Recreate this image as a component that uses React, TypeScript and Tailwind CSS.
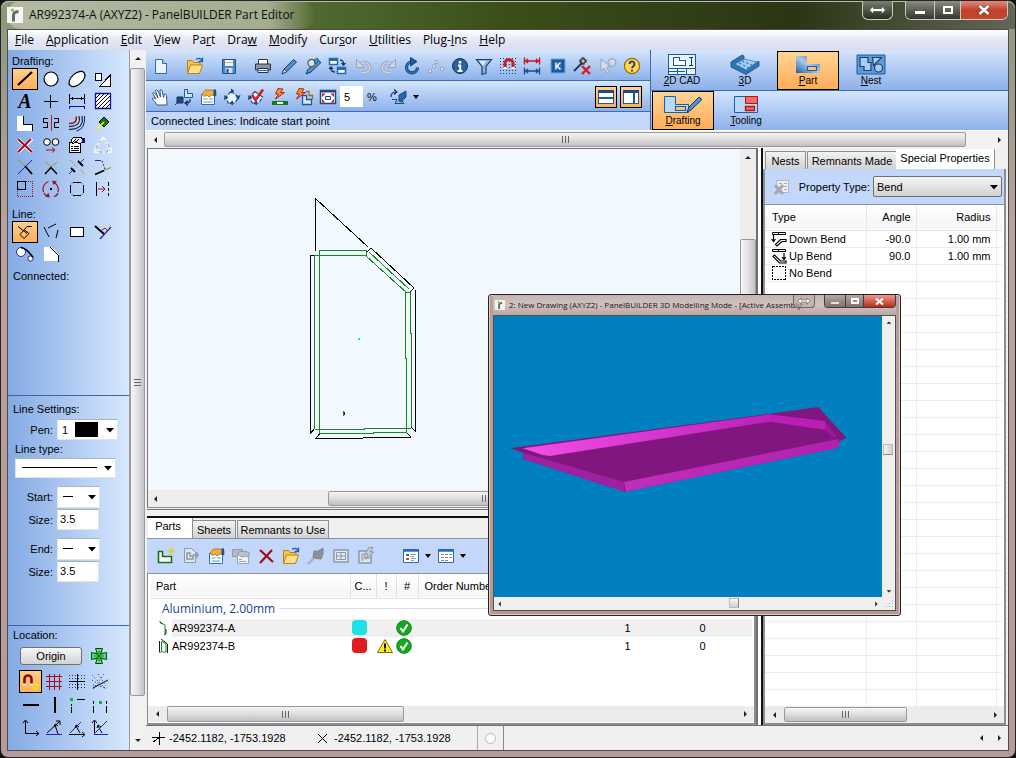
import React from "react";

type Kids = { children?: React.ReactNode };

function Ico({ w = 20, h = 20, crisp = false, children }: Kids & { w?: number; h?: number; crisp?: boolean }) {
  return (
    <svg
      width={w}
      height={h}
      viewBox={`0 0 ${w} ${h}`}
      fill="none"
      stroke="#000"
      shapeRendering={crisp ? "crispEdges" : "auto"}
      aria-hidden="true"
      className="block shrink-0"
    >
      {children}
    </svg>
  );
}

/* ---------- scroll bars ---------- */

function Arrow({ dir, label, small }: { dir: "l" | "r" | "u" | "d"; label: string; small?: boolean }) {
  const d = { l: "M6 2v6L3 5z", r: "M4 2v6l3-3z", u: "M2 6h6L5 3z", d: "M2 4h6L5 7z" }[dir];
  const s = small ? 8 : 10;
  return (
    <button aria-label={label} className="flex size-full items-center justify-center">
      <svg width={s} height={s} viewBox="0 0 10 10" fill="#222" aria-hidden="true">
        <path d={d} />
      </svg>
    </button>
  );
}

function Grip({ vertical }: { vertical?: boolean }) {
  return (
    <svg width="9" height="9" viewBox="0 0 9 9" shapeRendering="crispEdges" fill="#666" aria-hidden="true">
      {vertical ? <path d="M1 1h7v1H1zM1 4h7v1H1zM1 7h7v1H1z" /> : <path d="M1 1h1v7H1zM4 1h1v7H4zM7 1h1v7H7z" />}
    </svg>
  );
}

const H_THUMB = "flex items-center justify-center rounded-[2px] border border-[#9a9a9a] bg-linear-to-b from-[#f4f4f4] via-[#dedede] to-[#c0c0c4]";
const V_THUMB = "flex items-center justify-center rounded-[2px] border border-[#9a9a9a] bg-linear-to-r from-[#f6f6f6] via-[#e2e2e4] to-[#c3c3c8]";

/* ---------- sidebar ---------- */

function SideBtn({ label, on, children }: Kids & { label: string; on?: boolean }) {
  return (
    <button
      aria-label={label}
      className={
        on
          ? "flex h-[22px] w-[26px] items-center justify-center bg-linear-to-b from-[#ffd08a] to-[#ffae57] outline-1 -outline-offset-1 outline-black"
          : "flex h-[22px] w-[26px] items-center justify-center"
      }
    >
      {children}
    </button>
  );
}

function S({ children, smooth }: Kids & { smooth?: boolean }) {
  return (
    <Ico w={26} h={22} crisp={!smooth}>
      {children}
    </Ico>
  );
}

const draftingTools: { name: string; on?: boolean; icon: React.ReactNode }[] = [
  { name: "Line", on: true, icon: <S smooth><path d="M6 17 20 4" strokeWidth="2.200" /></S> },
  { name: "Circle", icon: <S smooth><circle cx="13" cy="11" r="7" fill="#fff" strokeWidth="1.200" /></S> },
  { name: "Ellipse", icon: <S smooth><ellipse cx="13" cy="11" rx="9.500" ry="5.500" fill="#fff" strokeWidth="1.200" transform="rotate(-42 13 11)" /></S> },
  { name: "Shapes", icon: <S><path d="M5.500 5.500h6v7h-6zM20.500 7v11.500H9.500z" fill="#fff" /></S> },
  { name: "Text", icon: <span className="font-['Liberation_Serif',serif] text-xl leading-none font-bold italic">A</span> },
  { name: "Point", icon: <S><path d="M6 11.500h14M12.500 5v13" /></S> },
  { name: "Dimension", icon: <S><path d="M5.500 4v10M20.500 4v10M6 8.500h14M8.500 7v3M17.500 7v3" /><path d="M12 8h3v1h-3z" fill="#000" stroke="none" /><path d="M5.500 19v-2.500h15V19" stroke="#10109a" /></S> },
  { name: "Hatch", icon: <S smooth><path d="M5.500 3.500h15v15h-15z" fill="#fff" stroke="#10109a" strokeWidth="1.300" /><path d="M6 8l4-4M6 12l8-8M6 16l12-12M8 18 20 6M12 18l8-8M16 18l4-4" /></S> },
  { name: "Profile", icon: <S><path d="M5 4h6v9h9v6H5z" fill="#fff" stroke="none" /><path d="M11.500 4v8.500h9V19" /></S> },
  { name: "Mirror", icon: <S><path d="M10 6.500H5.500v4H9.500v5H5M16 6.500h4.500v4H16.500v5H21" /><path d="M13.500 3v16" stroke="#c01820" /></S> },
  { name: "Offset", icon: <S smooth><path d="M12 4.500q2 7-7 7" stroke="#a01020" strokeWidth="1.400" /><path d="M15 4q3 10.500-10 10.500M18 4q3 13.500-13 13.500" /><path d="M20.500 4q1 13-8 15" stroke="#10109a" /></S> },
  { name: "Erase", icon: <S smooth><path d="m14 5 5 5-5 5-5-5z" fill="#0b7d10" strokeWidth="1" /><path d="m6 18 8-8" stroke="#f5f02a" strokeWidth="1.600" /></S> },
  { name: "Delete", icon: <S smooth><path d="m6 5 14 13M20 5 6 18" stroke="#fff" strokeWidth="3.500" /><path d="m6 5 14 13M19 5 6 18" stroke="#a01018" strokeWidth="2" /></S> },
  { name: "Copy", icon: <S smooth><circle cx="9" cy="8" r="3.300" fill="#fff" /><circle cx="17.500" cy="8" r="3.300" fill="#fff" /><path d="M8 16h9m-3-2.500 3 2.500-3 2.500" stroke="#a01020" /></S> },
  { name: "Properties", icon: <S><path d="M5.500 8.500h11v10h-11z" fill="#fff" /><path d="M7 12.500h2M10 12.500h5M7 14.500h2M10 14.500h5M7 16.500h8" /><path d="M7 8V5.500l3-2h6l3 1v4l-4 1-3-2-3 2z" fill="#e8e8e8" /><path d="m9 8 3-3M12 8l3-3" /><path d="M18 4h3v5h-3z" fill="#10109a" stroke="none" /></S> },
  { name: "Polygon", icon: <S smooth><path d="M13 4 19.500 12l-2.500 6H9l-2.500-6z" stroke="#f6f8fb" strokeWidth="2.200" /><path d="M13 4 19.500 12l-2.500 6H9l-2.500-6z" stroke="#8b95a6" strokeDasharray="5 2" /><path d="m10.500 6.500 2.500-3 2.500 3M5 14l-.5 4 4 .5M21 13.500l.5 4.500-4 .5" stroke="#f6f8fb" strokeWidth="1.500" /></S> },
  { name: "Trim", icon: <S smooth><path d="m6 4 7 6" stroke="#9c9c28" /><path d="m13 10 7 8" strokeWidth="1.800" /><path d="M20 4 6 18" stroke="#2528a8" /></S> },
  { name: "Extend", icon: <S smooth><path d="m7 5 6 6M19 6l-6 5" stroke="#9c9c28" /><path d="m7 18 6-6.500 6 6.500" strokeWidth="1.500" /></S> },
  { name: "Break", icon: <S smooth><path d="m6 4 7 7M20 18l-4-5" stroke="#9c9c28" strokeDasharray="2 1" /><path d="m5 18 5-5M15 8l5-5" stroke="#2528a8" /><path d="m7 12 4 4M14 5l5 5" strokeWidth="1.800" /></S> },
  { name: "Fillet", icon: <S smooth><path d="M5 4.500h6" stroke="#2528a8" /><path d="m12 5 3 8" strokeDasharray="1.500 2" /><path d="m5 18.500 9-4" strokeWidth="1.800" /><path d="m14 14.500 7-3" stroke="#9c9c28" strokeWidth="1.300" /></S> },
  { name: "Scale", icon: <S><path d="M5.500 3.500h15v15h-15z" stroke="#a01020" strokeDasharray="1 1" /><path d="M5.500 3.500h8v8h-8z" /></S> },
  { name: "Rotate", icon: <S smooth><path d="M5.500 14a8 8 0 0 1 5-10.500M16 4.500a8 8 0 0 1 4 9.500M9 18q-2-1-3-3M20 15q-1 3-4 3.500" stroke="#a01020" strokeWidth="1.200" /><path d="m14 2.500 5 1-3.500 3.500zM12 19.500l-5-1 3.500-3.500z" fill="#a01020" stroke="none" /><path d="M12 10h2v2h-2z" fill="#000" stroke="none" /></S> },
  { name: "Chamfer", icon: <S smooth><path d="M9 4.500h8M9 17.500h8M6.500 7v8M19.500 7v8" /><path d="M7 6l2-1M17 5l2 1M7 16l2 1M17 17l2-1" stroke="#8b93ab" /></S> },
  { name: "Stretch", icon: <S smooth><path d="M6.500 4v14M18.500 4v4M18.500 10v3M18.500 15v3" /><path d="M8 11h7m-3-3 3 3-3 3" stroke="#a01020" /></S> },
];

const lineTools: { name: string; on?: boolean; icon: React.ReactNode }[] = [
  { name: "Connected", on: true, icon: <S smooth><path d="m6 5.500 9 7M20 5.500h-5l-7 8 4 4 5-5-5-4" strokeWidth="1" /></S> },
  { name: "Separate", icon: <S smooth><path d="m6 6 5 10M10 7l8-4M20 9l-2 8" strokeWidth="1" /></S> },
  { name: "Rectangle", icon: <S><path d="M6.500 6.500h13v9h-13z" fill="#fff" /></S> },
  { name: "Perpendicular", icon: <S smooth><path d="m5 5 9 8" strokeWidth="2" /><path d="M10 18 21 6" stroke="#2528a8" strokeWidth="1.300" /><path d="m12 9 3-2 3 3" stroke="#a01020" /></S> },
  { name: "Tangent", icon: <S smooth><circle cx="9" cy="9" r="4.500" fill="#fff" stroke="#2528a8" /><circle cx="18.500" cy="15.500" r="2.600" fill="#fff" stroke="#2528a8" /><path d="M9 4.500q6 1 12 10" strokeWidth="1.600" /></S> },
  { name: "Corner", icon: <S><path d="M6 4h7l8 8v6H6z" fill="#fff" stroke="none" /><path d="M12 4l8 8v7" /></S> },
];

function L({ children, crisp = true }: Kids & { crisp?: boolean }) {
  return (
    <Ico w={22} h={22} crisp={crisp}>
      {children}
    </Ico>
  );
}

const locationTools: { name: string; on?: boolean; icon: React.ReactNode }[] = [
  { name: "Snap", on: true, icon: <L crisp={false}><path d="M4.500 13V8a3.500 3.500 0 0 1 7 0v5" stroke="#8c0c14" strokeWidth="2.600" /><path d="M3 13.500h3M10 13.500h3" stroke="#f4f4f4" strokeWidth="2" /><path d="M13.500 13.500h4v4h-4z" stroke="#f0e810" strokeWidth="1.400" /></L> },
  { name: "Grid", icon: <L><path d="M3 5.500h16M3 10.500h16M3 15.500h16M6.500 3v16M11.500 3v16M16.500 3v16" stroke="#a01020" /></L> },
  { name: "Dot grid", icon: <L><path d="M3 4.500h16M3 7.500h16M3 13.500h16M3 16.500h16" stroke="#2528a8" strokeDasharray="1 2" /><path d="M3 10.500h16M11.500 3v16" /></L> },
  { name: "Radial grid", icon: <L crisp={false}><path d="M3 4l14 14M3 9l14 9M4 14l14 3M9 3l8 12M15 3l-11 15" stroke="#2528a8" strokeDasharray="1 2.500" /><path d="m4 17 15-8" /></L> },
  { name: "Horizontal", icon: <L><path d="M3 11h16" strokeWidth="2" /></L> },
  { name: "Vertical", icon: <L><path d="M12 3v16" strokeWidth="2" /></L> },
  { name: "Align corner", icon: <L><path d="M4 4h3v3H4z" fill="#16b030" stroke="none" /><path d="M11 5.500h8M5.500 10v2M5.500 13v6" /></L> },
  { name: "Align middle", icon: <L><path d="M4.500 7v3M4.500 12v7M17.500 7v3M17.500 12v7" /><path d="M10 7h3v3h-3z" fill="#16b030" stroke="none" /></L> },
  { name: "Axes", icon: <L crisp={false}><path d="M5.500 4v12.500H18M3 6l2.500-3L8 6M16 14l3 2.500-3 2.500" /></L> },
  { name: "Polar", icon: <L crisp={false}><path d="M4 16 17 4M13 4h4v4M12 8l3 9M11 10l1-3 3 2" /><path d="M3 17.500h16" stroke="#2528a8" /></L> },
  { name: "Angle", icon: <L crisp={false}><path d="M4 16 15 5" stroke="#2528a8" /><path d="M3 17.500h15m-2-2.500 3 2.500-3 2.500M10 9l4 7M9 11l1-3 3 2" /></L> },
  { name: "Axis angle", icon: <L crisp={false}><path d="M5.500 4v13M3 6l2.500-3L8 6M9 9l4 7M8 11l1-3 3 2" /><path d="M5 17 18 4M5 17.500h14" stroke="#2528a8" /></L> },
];

function Caret() {
  return (
    <svg width="8" height="5" viewBox="0 0 8 5" aria-hidden="true" className="pointer-events-none absolute top-1/2 right-1 -mt-0.5">
      <path d="M0 0h8L4 4.500z" />
    </svg>
  );
}

const FIELD = "border border-[#dfe5ee] border-t-[#a9b2c0] bg-white";

function StyleSelect({ label, id }: { label: string; id: string }) {
  return (
    <div className="flex items-center gap-1">
      <label htmlFor={id} className="w-[45px] text-right">{label}</label>
      <div className="relative">
        <select id={id} className={`${FIELD} block h-[22px] w-[43px] appearance-none`}>
          <option value="plain" aria-label="Plain" />
        </select>
        <span className="pointer-events-none absolute top-2.5 left-1.5 h-px w-2.5 bg-black" />
        <Caret />
      </div>
    </div>
  );
}

function SizeField({ id }: { id: string }) {
  return (
    <div className="flex items-center gap-1">
      <label htmlFor={id} className="w-[45px] text-right">Size:</label>
      <input id={id} defaultValue="3.5" className={`${FIELD} h-[21px] w-[42px] px-0.5 pb-0.5`} />
    </div>
  );
}

function Sidebar() {
  return (
    <aside className="flex w-[121px] shrink-0 flex-col bg-linear-to-r from-[#84aae4] to-[#d8e8fe]">
      <section className="min-h-[345px] px-1 pt-1">
        <h2 className="h-[14px] leading-[14px]">Drafting:</h2>
        <div className="grid grid-cols-[repeat(4,26px)]">
          {draftingTools.map((t) => (
            <SideBtn key={t.name} label={t.name} on={t.on}>{t.icon}</SideBtn>
          ))}
        </div>
        <h2 className="mt-[7px] h-[14px] leading-[14px]">Line:</h2>
        <div className="grid grid-cols-[repeat(4,26px)]">
          {lineTools.map((t) => (
            <SideBtn key={t.name} label={t.name} on={t.on}>{t.icon}</SideBtn>
          ))}
        </div>
        <h2 className="mt-1 pl-px leading-[14px]">Connected:</h2>
      </section>
      <section className="min-h-[230px] border-t border-[#3c66a4] pt-1.5">
        <h2 className="pl-[5px] leading-[14px]">Line Settings:</h2>
        <div className="mt-[3px] flex items-center gap-1">
          <label htmlFor="pen" className="w-[45px] text-right">Pen:</label>
          <div className="relative">
            <select id="pen" className={`${FIELD} block h-[21px] w-[61px] appearance-none pl-1`}>
              <option>1</option>
            </select>
            <span className="pointer-events-none absolute top-[3px] left-[18px] h-[15px] w-[23px] bg-black" />
            <Caret />
          </div>
        </div>
        <label htmlFor="linetype" className="mt-0.5 block pl-[7px] leading-[14px]">Line type:</label>
        <div className="relative mt-0.5 ml-[7px] w-[101px]">
          <select id="linetype" className={`${FIELD} block h-[20px] w-full appearance-none`}>
            <option value="solid" aria-label="Solid" />
          </select>
          <span className="pointer-events-none absolute top-[9px] left-[7px] h-px w-[75px] bg-black" />
          <Caret />
        </div>
        <div className="mt-2 flex flex-col gap-px">
          <StyleSelect label="Start:" id="start" />
          <SizeField id="start-size" />
        </div>
        <div className="mt-2 flex flex-col gap-px">
          <StyleSelect label="End:" id="end" />
          <SizeField id="end-size" />
        </div>
      </section>
      <section className="flex-1 border-t border-[#3c66a4] pt-0.5">
        <h2 className="pl-[5px] leading-[14px]">Location:</h2>
        <div className="mt-[5px] ml-3 flex items-center gap-2">
          <button className="h-[18px] w-[62px] rounded-[3px] border border-[#707070] bg-linear-to-b from-[#f6f6f6] to-[#d4d4d4]">Origin</button>
          <button aria-label="Set origin">
            <Ico w={18} h={18}>
              <path d="M5.500 1.500h7L10.500 7l6-1.500v7L10.500 11l2 5.500h-7L7.500 11l-6 1.500v-7L7.500 7z" fill="#4fe868" stroke="#05460c" />
              <path d="m5.500 5.500 7 7M12.500 5.500l-7 7M9 4v10M4 9h10" stroke="#05460c" strokeWidth=".7" />
            </Ico>
          </button>
        </div>
        <div className="mt-[5px] ml-[11px] grid grid-cols-[repeat(4,23px)]">
          {locationTools.map((t) => (
            <button
              key={t.name}
              aria-label={t.name}
              className={
                t.on
                  ? "flex h-[23px] w-[23px] items-center justify-center bg-linear-to-b from-[#ffd08a] to-[#ffae57] outline-1 -outline-offset-1 outline-black"
                  : "flex h-[23px] w-[23px] items-center justify-center"
              }
            >
              {t.icon}
            </button>
          ))}
        </div>
      </section>
    </aside>
  );
}

/* ---------- top tool bars ---------- */

function TB({ label, children }: Kids & { label: string }) {
  return (
    <button aria-label={label} className="flex h-6 w-6 shrink-0 items-center justify-center">
      <Ico>{children}</Ico>
    </button>
  );
}

function FolderArt() {
  return (
    <>
      <path d="M2.500 17V4.500h5l1.500 2h6V9" fill="#f3c64c" stroke="#b8801a" />
      <path d="M2.500 17.500 5.500 9h12l-3 8.500z" fill="#ffe08a" stroke="#b8801a" />
      <path d="M11 3.500q4-2.500 6 1M17.500 1.500v4h-4" stroke="#1f5ea8" strokeWidth="1.300" />
    </>
  );
}

function PropsArt({ off }: { off?: boolean }) {
  return (
    <>
      <path d="M3.500 7.500h13v10h-13z" fill={off ? "#dfe3ea" : "#fff"} stroke={off ? "#9aa2ae" : "#2a70b8"} />
      <path d="M4 7 7.500 3H14l4 1v5l-4-1-3 2-2-2-3 1.500z" fill={off ? "#bcc2cb" : "#f2ae3c"} stroke={off ? "#959ca8" : "#a06c1c"} strokeWidth=".8" />
      <path d="M5.500 12h4M5.500 15h9M11 12h4" stroke={off ? "#9aa2ae" : "#4a9bd8"} />
      <path d="M15.500 2.500H18V9h-2.500z" fill={off ? "#959ca8" : "#1d4f90"} stroke="none" />
    </>
  );
}

function ToolbarOne() {
  return (
    <div role="toolbar" aria-label="Standard" className="flex h-[31px] items-center border-b border-[#3f6bac] bg-linear-to-b from-[#d4e5fc] to-[#8db1ea] pt-px pl-[3px]">
      <div className="flex gap-2.5">
        <TB label="New"><path d="M4.500 3.500h7l4 4v10h-11z" fill="#eaf3fd" stroke="#2d6cb0" /><path d="M11.500 3.500v4h4" fill="#bcd6f2" stroke="#2d6cb0" /></TB>
        <TB label="Open"><FolderArt /></TB>
        <TB label="Save"><path d="M3.500 3.500h13v14h-13z" fill="#4e86c8" stroke="#1f4f90" /><path d="M6 4h8v6H6z" fill="#eef4fb" stroke="none" /><path d="M6 6.500h8" stroke="#e4b050" /><path d="M6.500 12h7v5h-7z" fill="#d5dce6" stroke="none" /><path d="M7.500 13h2v4h-2z" fill="#1f4f90" stroke="none" /></TB>
        <TB label="Print"><path d="M5.500 8V3.500h9V8" fill="#fff" stroke="#333" /><path d="M2.500 8h15v6h-15z" fill="#8b95a4" stroke="#2c323c" /><path d="M5 12.500h10v4H5z" fill="#e8eef6" stroke="#2c323c" /><path d="M6 14.500h8" stroke="#2d6cb0" /></TB>
      </div>
      <div className="ml-0.5 flex">
        <TB label="Pencil"><path d="M3 18 5 13 14.500 3.500 17.500 6 8 15.500z" fill="#4c92d4" stroke="#153a66" /><path d="M3 18 5 13l3 2.500z" fill="#f3dcae" stroke="#153a66" strokeWidth=".8" /></TB>
        <TB label="Find pencil"><path d="M3 18 5 13.500 15 4 18 6.500 8 16z" fill="#4c92d4" stroke="#153a66" /><circle cx="8.500" cy="7" r="3.600" fill="#cde4f8" stroke="#6a5a20" strokeWidth="1.200" /><path d="m11 4 3-2 2 2-3.500 4z" fill="#4c92d4" stroke="#153a66" strokeWidth=".7" /></TB>
        <TB label="Swap windows"><path d="M2.500 2.500h8v6h-8zM10.500 11.500h8v6h-8z" fill="#fff" stroke="#2468b0" strokeWidth="1.500" /><path d="M2 4h9M10 13h9" stroke="#2468b0" strokeWidth="2" /><path d="M13 4q4 0 3.500 5M14.500 7l2 2 2-2M8 16q-5 0-4-5M2 13l2-2 2 2" stroke="#1d2f60" strokeWidth="1.300" /></TB>
      </div>
      <div className="ml-[3px] flex">
        <TB label="Undo"><path d="M8 16.500c5 1 8.500-2 7.500-6s-6-5-9-2" stroke="#9aa6b8" strokeWidth="3.200" /><path d="M8 16.500c5 1 8.500-2 7.500-6s-6-5-9-2" stroke="#cdd5e2" strokeWidth="1.500" /><path d="M2.500 3.500v8h8z" fill="#cdd5e2" stroke="#9aa6b8" /></TB>
        <TB label="Redo"><path d="M12 16.500c-5 1-8.500-2-7.500-6s6-5 9-2" stroke="#9aa6b8" strokeWidth="3.200" /><path d="M12 16.500c-5 1-8.500-2-7.500-6s6-5 9-2" stroke="#cdd5e2" strokeWidth="1.500" /><path d="M17.500 3.500v8h-8z" fill="#cdd5e2" stroke="#9aa6b8" /></TB>
        <TB label="Refresh"><path d="M9 6a5.500 5.500 0 1 0 6.500 5.500" stroke="#16447e" strokeWidth="3.200" /><path d="M9 6a5.500 5.500 0 1 0 6.500 5.500" stroke="#2e78c4" strokeWidth="1.400" /><path d="M8.500 1.500v8.500L15 5.500z" fill="#1d5a9e" stroke="#16447e" /></TB>
        <TB label="Nodes"><path d="m4 14 4-4 2.500-3 4 4 2 3" stroke="#9aa6b8" strokeDasharray="2 1" /><path d="M2.500 13.500h3v3h-3zM9 4.500h3v3H9zM14.500 11.500h3v3h-3zM6.500 9h3v3h-3z" fill="#dfe6f0" stroke="#9aa6b8" /></TB>
        <TB label="Information"><circle cx="10" cy="10" r="7.500" fill="#2a5f9c" stroke="#12345e" /><path d="M10 5v2.500" stroke="#fff" strokeWidth="2.600" /><path d="M8 9.500h2.200V15M7.500 15h5" stroke="#fff" strokeWidth="2" /></TB>
        <TB label="Filter"><path d="M2.500 3.500h15l-5.500 7V17l-4 1.500v-8z" fill="#8fb5de" stroke="#1a3f70" strokeWidth="1.200" /><path d="M5 5h7l-3 5z" fill="#dcebfa" stroke="none" /></TB>
        <TB label="Snap grid"><path d="M2 2.500h17M2 5.500h17M2 8.500h17M2 11.500h17M2 14.500h17M2 17.500h17" stroke="#1c3f78" strokeDasharray="1 2" /><path d="M7 12V7.500a4 4 0 0 1 8 0V12" stroke="#c82020" strokeWidth="3" /><path d="M5.500 12h3M13.500 12h3" stroke="#fff" strokeWidth="2" /></TB>
        <TB label="Dimensions"><path d="M2.500 1.500v7M17.500 1.500v7M3 5h14M6 3 4 5l2 2M14 3l2 2-2 2" stroke="#c01820" strokeWidth="1.400" /><path d="M2.500 11.500v7M17.500 11.500v7M3 15h14M6 13l-2 2 2 2M14 13l2 2-2 2" stroke="#1c4c88" strokeWidth="1.400" /></TB>
      </div>
      <div className="ml-0.5 flex">
        <TB label="Key"><path d="M3 3h14v14H3z" fill="#1b5a9c" stroke="#6fa6dc" /><path d="M6.500 6.500h7v7h-7z" fill="#2f78c0" stroke="none" /><path d="M8 6.500v7M12.500 6.500 9 10l3.500 3.500" stroke="#fff" strokeWidth="1.300" /></TB>
        <TB label="Remove point"><path d="m2 15 8-8" stroke="#1d2f60" strokeWidth="1.800" /><path d="M11 1.500v7M7.500 5h7" strokeWidth="3" /><path d="M11 2.500v5M8.500 5h5" stroke="#fff" /><path d="m10 10 8 8M18 10l-8 8" stroke="#d02020" strokeWidth="2.400" /></TB>
      </div>
      <div className="ml-0.5 flex">
        <TB label="Pointer help"><path d="M3 3v12l3-3 3 5 2-1-2.500-5H13z" fill="#d5dde9" stroke="#98a6bd" /><circle cx="14" cy="6.500" r="4" fill="#c4cedf" stroke="#98a6bd" /><path d="M12.500 5.500q1.500-2 3 0 0 1-1.500 2.500" stroke="#eef2f8" /></TB>
        <TB label="Help"><circle cx="10" cy="10" r="7.600" fill="#ffd84a" stroke="#9a6c10" strokeWidth="1.300" /><path d="M7.500 8a2.500 2.500 0 1 1 4 2q-1.500 1-1.500 2.200M10 13.800v1.700" stroke="#1a3f70" strokeWidth="1.900" /></TB>
      </div>
    </div>
  );
}

function ToolbarTwo() {
  return (
    <div role="toolbar" aria-label="View" className="flex h-[31px] items-center border-b border-[#3f6bac] bg-linear-to-b from-[#d4e5fc] to-[#8db1ea] pt-px pr-2 pl-0.5">
      <TB label="Pan"><path d="M7 18q-1-3-5-6 1-2 4 0L2.500 6q1-1.500 2.500.5L8 11 5.500 3.500q1.500-1.500 2.500.5l2.500 6L10 3q1.500-1 2.200.8l1.300 6.700 1-3.500q1.500-.5 2 1.500l.5 9.500z" fill="#fff" stroke="#2a4a78" strokeWidth=".9" /></TB>
      <TB label="Move to part"><path d="m1 18 4-4M3 10h6v6H3z" fill="#1b4a84" stroke="#12345e" /><path d="M10.500 2.500h3v4h5v4h-8z" fill="#cfe4fa" stroke="#1b5a9c" /><path d="M16 12q1 4-4 4m2-2.500-3 2.500 3 2.500" stroke="#1d2f60" strokeWidth="1.300" /></TB>
      <TB label="Properties"><PropsArt /></TB>
      <TB label="Regenerate"><path d="M9 4.500 16.500 10 13 16H6L4 10z" fill="#e8f2fd" stroke="#1b4a84" strokeWidth="1.200" strokeDasharray="4 1.500" /><path d="m9 1.500 3.500 2.500L9 6.500zM18.500 8l-2 5-3-3.500zM11 18.500l-4-2.500 4-2.500zM2 13l.5-5 4 3z" fill="#1b4a84" stroke="none" /></TB>
      <TB label="Check"><path d="M9 4.500 16.500 10 13 16H6L4 10z" fill="#e8f2fd" stroke="#1b4a84" strokeWidth="1.200" strokeDasharray="4 1.500" /><path d="M2 13l.5-5 4 3zM11 18.500l-4-2.500 4-2.500z" fill="#1b4a84" stroke="none" /><path d="m6 8 3.500 5L17 2.500" stroke="#d02020" strokeWidth="2.600" /></TB>
      <TB label="Flash tool"><path d="m8 1.500 5 .5-2.500 3.500h4L5.500 12l3-5h-3z" fill="#f5922c" stroke="#a01818" strokeWidth=".9" /><path d="M2 14h16v4H2z" fill="#127a1a" stroke="none" /><path d="M7 15h6v2H7z" fill="#fff" stroke="none" /></TB>
      <TB label="Flash part"><path d="M8.500 8.500h4v4h5v5h-9z" fill="#d6e8fa" stroke="#1b5a9c" strokeWidth="1.300" /><path d="M12 4.500h3v4h3.500v4" stroke="#a86a18" strokeWidth="1.300" /><path d="m5 1.500 5 .5-2.500 3.500h4L2.500 12l3-5h-3z" fill="#f5922c" stroke="#a01818" strokeWidth=".9" /></TB>
      <TB label="Zoom extents"><path d="M2.500 3.500h15v13h-15z" fill="#fff" stroke="#1b4a84" strokeWidth="1.500" /><path d="M2 4.500h16" stroke="#1b4a84" strokeWidth="2" /><path d="M7.500 9.500h5v3h-5z" stroke="#1b4a84" /><path d="M4 6.500h3.500L4 10zM16 6.500h-3.500L16 10zM4 15.500h3.500L4 12zM16 15.500h-3.500L16 12z" fill="#d02020" stroke="none" /></TB>
      <input aria-label="Zoom step" defaultValue="5" className="h-[21px] w-[23px] bg-white px-1" />
      <span className="ml-1 w-3">%</span>
      <div className="ml-2">
        <TB label="View angle"><path d="M3 12.500h5l-2 4h9l-3-4" fill="#8cbbe8" stroke="#1b4a84" /><path d="M10 14V8l7-4v6l-5 5z" fill="#2368b0" stroke="#12345e" strokeWidth=".8" /><path d="M2 10q0-5 5-5M5 2.500 8 5 5 7.500" stroke="#1d2f60" strokeWidth="1.200" /></TB>
      </div>
      <button aria-label="View angle menu" className="px-0.5"><svg width="6" height="4" viewBox="0 0 6 4" aria-hidden="true"><path d="M0 0h6L3 4z" /></svg></button>
      <div className="ml-auto flex gap-[3px]">
        <button aria-label="Split horizontal" className="flex size-[22px] items-center justify-center border border-black bg-linear-to-b from-[#ffd08a] to-[#ffae57]">
          <Ico w={16} h={14} crisp><path d="M.5.500h15v13H.5z" fill="#fff" stroke="#1b5a9c" /><path d="M0 1.500h16" stroke="#1b4a84" strokeWidth="3" /><path d="M0 8h16" stroke="#1b5a9c" strokeWidth="2" /></Ico>
        </button>
        <button aria-label="Split vertical" className="flex size-[22px] items-center justify-center border border-black bg-linear-to-b from-[#ffd08a] to-[#ffae57]">
          <Ico w={16} h={14} crisp><path d="M.5.500h15v13H.5z" fill="#fff" stroke="#1b5a9c" /><path d="M0 1.500h16" stroke="#1b4a84" strokeWidth="3" /><path d="M11 2v12" stroke="#1b5a9c" strokeWidth="2" /></Ico>
        </button>
      </div>
    </div>
  );
}

function ModeBtn({ hot, rest, on, children }: Kids & { hot: string; rest: string; on?: boolean }) {
  return (
    <button
      className={
        on
          ? "flex h-[39px] w-[62px] flex-col items-center bg-linear-to-b from-[#ffd596] to-[#ffac56] pt-[3px] text-[10px] leading-[11px] outline-1 -outline-offset-1 outline-black"
          : "flex h-[39px] w-[62px] flex-col items-center pt-[3px] text-[10px] leading-[11px]"
      }
    >
      {children}
      <span>
        <u>{hot}</u>
        {rest}
      </span>
    </button>
  );
}

function ModeBars() {
  return (
    <div className="flex flex-1 flex-col border-l border-[#3f6bac]">
      <div className="flex h-[41px] items-center gap-px border-b border-[#3f6bac] bg-linear-to-b from-[#d4e5fc] to-[#8db1ea]">
        <ModeBtn hot="2" rest="D CAD">
          <Ico w={30} h={21} crisp>
            <path d="M1.500.500h27v20h-27z" fill="#eaf4fd" stroke="#1b5a9c" />
            <path d="M1 14.500h28M1 17.500h17M10.500 14v7M19.500 14v7" stroke="#1b5a9c" />
            <path d="M6.500 3.500h6v3h6v5h-12z" stroke="#1b5a9c" fill="#fff" />
            <path d="M24 3v9M22 3.500h4M22 11.500h4" stroke="#12345e" />
          </Ico>
        </ModeBtn>
        <ModeBtn hot="3" rest="D">
          <Ico w={30} h={21}>
            <path d="M1 8 12 1l2 1v4L7 10l9 5 11-7 2-.5V12l-13 8.500L1 13z" fill="#2f74b8" stroke="#1b4a84" strokeWidth=".8" />
            <path d="M14 5 27 8l-11 8-11-6z" fill="#a9cdf0" stroke="#1b5a9c" strokeWidth=".6" />
            <path d="m12 7 10 4M9 9l10 5" stroke="#3c7cbc" strokeWidth="1.400" strokeDasharray="2.500 2" />
          </Ico>
        </ModeBtn>
        <ModeBtn hot="P" rest="art" on>
          <Ico w={26} h={21}>
            <defs>
              <linearGradient id="part-body" x1="0" x2="1" y1="1" y2="0">
                <stop offset="0" stopColor="#1f5ea0" />
                <stop offset=".5" stopColor="#a9cbea" />
                <stop offset="1" stopColor="#2f70b4" />
              </linearGradient>
            </defs>
            <path d="M1 2h11v8h13v9H1z" fill="url(#part-body)" stroke="none" />
            <path d="M12.500 12.500h9v4h-9z" fill="#ffc27a" stroke="#1f5ea0" strokeWidth="1.200" />
          </Ico>
        </ModeBtn>
        <ModeBtn hot="N" rest="est">
          <Ico w={30} h={21}>
            <path d="M1 1h28v19H1z" fill="#5f9bd6" stroke="#1b5a9c" />
            <path d="M4 3.500h8v5h3v8H8v-4H4zM16.500 3.500h9l-8 8z" fill="#a9cdf0" stroke="#1b3f70" strokeWidth="1.200" />
            <circle cx="22.500" cy="14" r="4" fill="#a9cdf0" stroke="#1b3f70" strokeWidth="1.200" />
          </Ico>
        </ModeBtn>
      </div>
      <div className="flex flex-1 items-center gap-px bg-linear-to-b from-[#d4e5fc] to-[#8db1ea] pl-px">
        <ModeBtn hot="D" rest="rafting" on>
          <Ico w={40} h={21}>
            <path d="M1.500 2.500h11v8h13v8h-24z" fill="#b9d8f5" stroke="#1f5ea0" />
            <path d="M12.500 12.500h10v4h-10z" fill="#ffc27a" stroke="#1f5ea0" strokeWidth="1.200" />
            <path d="M24 18 26 13 36 3l3 2.500L28 16z" fill="#4c92d4" stroke="#153a66" />
          </Ico>
        </ModeBtn>
        <ModeBtn hot="T" rest="ooling">
          <Ico w={26} h={21}>
            <path d="M1.500 2.500h23v16h-23z" fill="#b9d8f5" stroke="#1f5ea0" />
            <path d="M12.500 2.500h12v7h-12z" fill="#f26a60" stroke="#b01818" />
            <path d="M12.500 12.500h9v4h-9z" fill="#f26a60" stroke="#b01818" strokeWidth="1.300" />
          </Ico>
        </ModeBtn>
      </div>
    </div>
  );
}

/* ---------- drawing area ---------- */

function DrawingArea() {
  return (
    <div className="flex min-h-0 flex-1 flex-col border-t border-l border-[#6f747c] bg-[#f0f0f0]">
      <div className="flex min-h-0 flex-1">
        <div className="min-w-0 flex-1 bg-[#f2f9fe]">
          <svg className="block size-full" fill="none" shapeRendering="crispEdges" role="img" aria-label="Flat part outline">
            <g transform="translate(-148 -149)">
              <g stroke="#000">
                <path d="M368 247 315.500 198.500V250.500" />
                <path d="M315 255.500h-4.500V433.500l4-5" />
                <path d="M367 252l4-4 43 40-5 5M415.500 290V431.500l-4-4M319.500 434 316 438.500h23l72-1.500-4-4" />
                <path d="M344.500 412v3" />
              </g>
              <g stroke="#168a1c">
                <path d="M319 250.500h47M314 255.500h52M314.500 256v173M319.500 250v184M366 250v6" />
                <path d="m366 256 41 37M369 252l40 37M405.500 293v65l1 1v74M410.500 293v40l1 1v93" />
                <path d="M315 429.500h49l1-1h46M320 433.500h53l1-1h33M405 292.500h6" />
                <path d="M343.500 411v5" />
              </g>
              <path d="M358 338h2v2h-2z" fill="#00e5f5" />
            </g>
          </svg>
        </div>
        <div className="flex w-4 shrink-0 flex-col bg-[#ededed]">
          <div className="h-[18px]"><Arrow dir="u" label="Scroll drawing up" /></div>
          <div className="h-[72px]" />
          <div className={`${V_THUMB} h-[158px]`}><Grip vertical /></div>
          <div className="mt-auto h-4"><Arrow dir="d" label="Scroll drawing down" /></div>
        </div>
      </div>
      <div className="flex h-[17px] shrink-0 bg-[#ededed] pr-4">
        <div className="w-4"><Arrow dir="l" label="Scroll drawing left" /></div>
        <div className="flex flex-1 py-px pl-[164px]">
          <div className={`${H_THUMB} w-[315px]`}><Grip /></div>
        </div>
        <div className="w-4"><Arrow dir="r" label="Scroll drawing right" /></div>
      </div>
    </div>
  );
}

/* ---------- bottom parts list ---------- */

function Tick() {
  return (
    <Ico w={16} h={16}>
      <circle cx="8" cy="8" r="7.300" fill="#16a81e" stroke="#0a8412" />
      <path d="m4.500 8 2.500 3.500 4.500-7" stroke="#fff" strokeWidth="2" />
    </Ico>
  );
}

const parts = [
  { id: "AR992374-A", dot: "bg-[#1fe0e2]", warn: false, a: 1, b: 0 },
  { id: "AR992374-B", dot: "bg-[#e01c20]", warn: true, a: 1, b: 0 },
];

const TAB = "h-[18px] border border-b-0 border-[#8b8f95] bg-linear-to-b from-[#f2f2f2] to-[#d2d2d4]";

function PartsPanel() {
  return (
    <section className="flex h-[209px] shrink-0 flex-col border-t-2 border-[#111] bg-[#f0f0f0]">
      <div role="tablist" className="flex h-5 items-end pl-px">
        <button role="tab" aria-selected="true" className="h-5 w-[45px] border-r border-[#8b8f95] bg-white pr-1 pb-1">Parts</button>
        <button role="tab" className={`${TAB} w-[43px] border-l-0`}>Sheets</button>
        <button role="tab" className={`${TAB} ml-px w-[92px]`}>Remnants to Use</button>
      </div>
      <div role="toolbar" aria-label="Parts" className="flex h-9 shrink-0 items-center gap-px border-y border-[#8b93a3] bg-[#c3d7fa] pl-[7px]">
        <TB label="New part"><path d="M2.500 5.500h4v5h9v6h-13z" fill="#fff" stroke="#12701a" strokeWidth="1.600" /><path d="M15 1v8M11 5h8M12.500 2.500l5 5M17.500 2.500l-5 5" stroke="#d8d020" /></TB>
        <TB label="Import part"><path d="M3.500 2.500h7l4 4v10h-11z" fill="#dfe5ee" stroke="#9099a8" /><path d="M6 7h3v3h3v3H6zM12 9h6m-2-3v6" stroke="#9099a8" strokeWidth="1.500" /></TB>
        <TB label="Part properties"><PropsArt /></TB>
        <TB label="Copy properties"><path d="M1.500 3.500h10v7h-10z" fill="#b4bac4" stroke="#959ca8" /><path d="M6.500 8.500h11v9h-11z" fill="#eef1f5" stroke="#9aa2ae" /><path d="M6 8 9 5.500h6l3 1V11l-4-1-3 1z" fill="#bcc2cb" stroke="#959ca8" /><path d="M8 13.500h3M8 15.500h7" stroke="#9aa2ae" /></TB>
        <TB label="Delete part"><path d="m4 4 13 12M16 4 4 17" stroke="#a00c14" strokeWidth="2.200" /></TB>
        <TB label="Open part"><FolderArt /></TB>
        <TB label="Pin"><path d="M8 5q4 1 6-1l3-2v6l-2 5-8-1z" fill="#8a909a" stroke="#7c838e" /><path d="m8 12-6 6" stroke="#a7adb6" strokeWidth="2.200" /></TB>
        <TB label="Sheet layout"><path d="M3 4h14v12H3z" fill="#e3e9f2" stroke="#8e97a6" strokeWidth="1.500" /><path d="M5.500 6.500h9v7h-9zM10 6.500v7M5.500 10h9" stroke="#8e97a6" /></TB>
        <TB label="Auto nest"><path d="M3 5h12v12H3z" fill="#dfe5ee" stroke="#8e97a6" strokeWidth="1.500" /><path d="M6 15V8h3v4h5M13 1.500h4L14 6h4l-8 7 2-5H9z" fill="#c5ccd6" stroke="#8e97a6" /></TB>
        <div className="ml-5 flex items-center">
          <TB label="List view"><path d="M2.500 3.500h15v13h-15z" fill="#fff" stroke="#1f6cc0" /><path d="M2 4.500h16" stroke="#1f6cc0" strokeWidth="2.500" /><path d="M5 8h3v2H5z" fill="#3568c8" stroke="none" /><path d="M5 12h3v2H5z" fill="#d04818" stroke="none" /><path d="M10 8.500h5M10 10.500h3M10 12.500h5M10 14.500h3" stroke="#999" /></TB>
          <button aria-label="List view menu" className="w-[11px] pl-0.5"><svg width="6" height="4" viewBox="0 0 6 4" aria-hidden="true"><path d="M0 0h6L3 4z" /></svg></button>
          <TB label="Detail view"><path d="M2.500 3.500h15v13h-15z" fill="#fff" stroke="#1f6cc0" /><path d="M2 4.500h16" stroke="#1f6cc0" strokeWidth="2.500" /><path d="M5 8.500h11M5 11.500h11M5 14.500h8" stroke="#888" strokeDasharray="3 1" /></TB>
          <button aria-label="Detail view menu" className="w-[11px] pl-0.5"><svg width="6" height="4" viewBox="0 0 6 4" aria-hidden="true"><path d="M0 0h6L3 4z" /></svg></button>
        </div>
      </div>
      <div className="flex min-h-0 flex-1 flex-col border-r-2 border-b-2 border-l border-[#8b8f95] bg-white">
        <div className="min-h-0 flex-1 overflow-hidden px-0.5">
          <table className="w-full table-fixed border-collapse">
            <colgroup>
              <col className="w-[200px]" />
              <col className="w-[26px]" />
              <col className="w-5" />
              <col className="w-[22px]" />
              <col />
              <col className="w-[75px]" />
              <col className="w-[75px]" />
              <col className="w-3" />
            </colgroup>
            <thead>
              <tr className="h-[24px] border-b border-[#e2e2e2] bg-linear-to-b from-white to-[#f5f5f7] text-left">
                <th className="border-r border-[#e2e2e2] pl-1.5 font-normal">Part</th>
                <th className="border-r border-[#e2e2e2] text-center font-normal">C...</th>
                <th className="border-r border-[#e2e2e2] text-center font-normal">!</th>
                <th className="border-r border-[#e2e2e2] text-center font-normal">#</th>
                <th className="pl-1.5 font-normal">Order Number</th>
                <th />
                <th />
                <th />
              </tr>
            </thead>
            <tbody>
              <tr className="h-5">
                <td colSpan={8} className="p-0 pl-3">
                  <div className="flex items-center gap-1 font-['Open_Sans','Noto_Sans',sans-serif] text-xs leading-5 text-[#1c3f94]">
                    Aluminium, 2.00mm
                    <span className="h-px flex-1 bg-[#d5dbe8]" />
                  </div>
                </td>
              </tr>
              {parts.map((p, i) => (
                <tr key={p.id} className="h-[18px]">
                  <td className="p-0">
                    <div className="flex items-center gap-0.5 pl-2">
                      <Ico w={12} h={16}>
                        {i === 0 ? (
                          <>
                            <path d="M2 2.500 7 5v9" stroke="#168a1c" />
                            <path d="M1.500 1 4 4M8 9v5l-2 1" strokeWidth=".8" />
                          </>
                        ) : (
                          <>
                            <path d="M3.500 3.500 7 5l1 2v7H3.500z" stroke="#168a1c" />
                            <path d="M1.500 3v11l1 1M3 1l4 3 2.500 2V15" strokeWidth=".9" />
                          </>
                        )}
                      </Ico>
                      <span className={i === 0 ? "h-[18px] flex-1 bg-[#efefef] leading-[18px]" : "h-[18px] flex-1 leading-[18px]"}>{p.id}</span>
                    </div>
                  </td>
                  <td className={i === 0 ? "bg-[#efefef] p-0" : "p-0"}>
                    <span role="img" aria-label="Colour" className={`ml-0.5 block size-[15px] rounded-[4px] ${p.dot}`} />
                  </td>
                  <td className={i === 0 ? "bg-[#efefef] p-0" : "p-0"}>
                    {p.warn && (
                      <Ico w={18} h={16}>
                        <path d="M9 1.500 16.500 14.500h-15z" fill="#ffee22" stroke="#7a7410" />
                        <path d="M9 5.500v5M9 11.500v2" strokeWidth="1.800" />
                      </Ico>
                    )}
                  </td>
                  <td className={i === 0 ? "bg-[#efefef] p-0" : "p-0"}><Tick /></td>
                  <td className={i === 0 ? "bg-[#efefef]" : ""} />
                  <td className={i === 0 ? "bg-[#efefef] p-0 text-center" : "p-0 text-center"}>{p.a}</td>
                  <td className={i === 0 ? "bg-[#efefef] p-0 text-center" : "p-0 text-center"}>{p.b}</td>
                  <td className={i === 0 ? "bg-[#efefef]" : ""} />
                </tr>
              ))}
            </tbody>
          </table>
        </div>
        <div className="mb-px flex h-4 shrink-0 bg-[#ececec]">
          <div className="w-[19px]"><Arrow dir="l" label="Scroll parts left" /></div>
          <div className={`${H_THUMB} w-[237px]`}><Grip /></div>
          <div className="ml-auto w-[18px]"><Arrow dir="r" label="Scroll parts right" /></div>
        </div>
      </div>
    </section>
  );
}

/* ---------- right property panel ---------- */

const bends = [
  { name: "Down Bend", angle: "-90.0", radius: "1.00 mm" },
  { name: "Up Bend", angle: "90.0", radius: "1.00 mm" },
  { name: "No Bend", angle: "", radius: "" },
];

function BendIcon({ kind }: { kind: number }) {
  return (
    <Ico w={16} h={16} crisp={kind === 2}>
      {kind === 0 && (
        <>
          <path d="M1.500 1.500h13v2h-13zM7.500 2v2" strokeWidth="1" />
          <path d="M2.500 4v6M.5 8l2 2.500 2-2.500" strokeWidth="1.200" />
          <path d="M15 8.500H9.500l-5 5 1.500 1.500 5-4.500h4z" fill="#fff" strokeWidth="1.200" />
        </>
      )}
      {kind === 1 && (
        <>
          <path d="M1.500 1.500h13v2h-13zM7.500 2v2" strokeWidth="1" />
          <path d="M13 5v6M11 9l2 2.500L15 9" strokeWidth="1.200" />
          <path d="M2 8.500 3.500 7l6 6H15v2H8.500z" fill="#fff" strokeWidth="1.200" />
        </>
      )}
      {kind === 2 && <path d="M1.500 1.500h13v13h-13z" strokeDasharray="2 1" />}
    </Ico>
  );
}

function PropertyPanel() {
  const blanks = Array.from({ length: 40 }, (_, i) => i);
  return (
    <section className="flex w-[243px] shrink-0 flex-col">
      <div role="tablist" className="flex h-[21px] shrink-0 items-end pl-0.5">
        <button role="tab" className={`${TAB} w-[41px]`}>Nests</button>
        <button role="tab" className={`${TAB} ml-px w-[89px] border-r-0`}>Remnants Made</button>
        <button role="tab" aria-selected="true" className="h-5 w-[99px] border-r border-[#8b8f95] bg-white pb-0.5">Special Properties</button>
      </div>
      <div className="flex min-h-0 flex-1 flex-col border-x-2 border-t-0 border-b-2 border-[#8b8f95]">
        <div className="flex h-9 shrink-0 items-center border-b border-[#8b93a3] bg-[#c3d7fa] pr-0.5 pl-2">
          <button aria-label="Clear property">
            <Ico w={17} h={16}>
              <path d="M3.500 1.500h12v12h-12z" fill="#eceef2" stroke="#b2b7c0" />
              <path d="M6 4.500h3M11 4.500h3M11 7.500h3M11 10.500h3" stroke="#a3a9b3" />
              <path d="m2 6 8 9M10 6l-8 9" stroke="#a3a8b1" strokeWidth="3" />
            </Ico>
          </button>
          <label htmlFor="ptype" className="ml-auto pr-[3px]">Property Type:</label>
          <div className="relative">
            <select id="ptype" className="block h-[21px] w-[129px] appearance-none rounded-[2px] border border-[#707070] bg-linear-to-b from-[#f4f4f4] to-[#d2d2d2] pl-[3px]">
              <option>Bend</option>
            </select>
            <Caret />
          </div>
        </div>
        <div className="min-h-0 flex-1 overflow-hidden bg-white pr-0.5">
          <table className="w-full table-fixed border-collapse">
            <colgroup>
              <col />
              <col className="w-[50px]" />
              <col className="w-[80px]" />
              <col className="w-1.5" />
            </colgroup>
            <thead>
              <tr className="h-[25px] border-b border-[#e0e0e0] bg-linear-to-b from-white to-[#f5f5f7]">
                <th className="border-r border-[#e6e6e6] pl-[7px] text-left font-normal">Type</th>
                <th className="border-r border-[#e6e6e6] pr-[5px] text-right font-normal">Angle</th>
                <th className="border-r border-[#e6e6e6] pr-[5px] text-right font-normal">Radius</th>
                <th />
              </tr>
            </thead>
            <tbody>
              {bends.map((b, i) => (
                <tr key={b.name} className="h-[17px] border-b border-[#ececec]">
                  <td className="border-r border-[#ececec] p-0">
                    <div className="flex h-4 items-center gap-0.5 pl-1.5 leading-4">
                      <BendIcon kind={i} />
                      {b.name}
                    </div>
                  </td>
                  <td className="border-r border-[#ececec] p-0 pr-[5px] text-right">{b.angle}</td>
                  <td className="border-r border-[#ececec] p-0 pr-[5px] text-right">{b.radius}</td>
                  <td />
                </tr>
              ))}
              {blanks.map((n) => (
                <tr key={n} className="h-[17px] border-b border-[#ececec]">
                  <td className="border-r border-[#ececec] p-0" />
                  <td className="border-r border-[#ececec] p-0" />
                  <td className="border-r border-[#ececec] p-0" />
                  <td />
                </tr>
              ))}
            </tbody>
          </table>
        </div>
        <div className="flex h-[17px] shrink-0 bg-[#ececec]">
          <div className="w-[19px]"><Arrow dir="l" label="Scroll properties left" /></div>
          <div className={`${H_THUMB} my-px w-[123px]`}><Grip /></div>
          <div className="ml-auto w-[18px]"><Arrow dir="r" label="Scroll properties right" /></div>
        </div>
      </div>
    </section>
  );
}

/* ---------- floating 3D window ---------- */

function AppMark({ size }: { size: number }) {
  return (
    <svg width={size} height={size} viewBox="0 0 16 16" fill="none" aria-hidden="true" className="shrink-0">
      <path d="M0 0h16v16H0z" fill="#f4f4f2" />
      <path d="M6.500 14.500V8q0-3 5-3.500" stroke="#666a66" strokeWidth="3" />
      <circle cx="5.500" cy="3" r="1.600" fill="#7cc040" />
    </svg>
  );
}

function ModelWindow() {
  return (
    <div className="absolute top-[294px] left-[488px] flex h-[322px] w-[413px] flex-col rounded-[3px] border border-[#2c2022] bg-linear-to-b from-[#b3a09d] via-[#b69f9b] to-[#b29a96] px-1 pb-1 shadow-[inset_0_0_0_1px_#d9cbc8]">
      <div className="flex h-5 shrink-0 items-center gap-1 bg-linear-to-b from-[#c4b5b2] via-[#cfc2bf] to-[#b9a8a5] pl-0.5">
        <AppMark size={10} />
        <span className="font-['Open_Sans','Noto_Sans',sans-serif] text-[8px] leading-5 whitespace-nowrap text-[#1c1416]">
          2: New Drawing (AXYZ2) - PanelBUILDER 3D Modelling Mode - [Active Assembly: '...
        </span>
      </div>
      <button aria-label="Move to screen" className="absolute top-0 left-[304px] flex h-[13px] w-[22px] items-center justify-center rounded-b border border-t-0 border-[#75625f] bg-[#b7a9a6]/50">
        <svg width="12" height="8" viewBox="0 0 12 8" aria-hidden="true"><path d="m0 4 3-3v2h6V1l3 3-3 3V5H3v2z" fill="#fff" stroke="#555" strokeWidth=".6" /></svg>
      </button>
      <div className="absolute top-0 right-1 flex h-[13px] overflow-hidden rounded-b border border-t-0 border-[#4a3a38]">
        <button aria-label="Minimize 3D view" className="flex w-5 items-center justify-center bg-linear-to-b from-[#b5a7a4] to-[#7f6f6c]"><span className="mt-1 h-0.5 w-2 bg-[#e6dfdd]" /></button>
        <button aria-label="Maximize 3D view" className="flex w-[19px] items-center justify-center border-x border-[#4a3a38] bg-linear-to-b from-[#b5a7a4] to-[#7f6f6c]"><span className="h-1.5 w-2 border-2 border-white" /></button>
        <button aria-label="Close 3D view" className="flex w-[31px] items-center justify-center bg-linear-to-b from-[#e59a8c] to-[#b8260f]">
          <svg width="9" height="7" viewBox="0 0 9 7" aria-hidden="true"><path d="m1 .5 7 6M8 .5l-7 6" stroke="#fff" strokeWidth="2" /></svg>
        </button>
      </div>
      <div className="flex min-h-0 flex-1 flex-col border border-[#5b4c4a] bg-white">
        <div className="flex min-h-0 flex-1">
          <div className="min-w-0 flex-1 bg-[#0080c0]">
            <svg viewBox="42 93 1164 843" className="block size-full" role="img" aria-label="Folded tray in 3D">
              <defs>
                <linearGradient id="wall" x1="0" x2="1" y1="0" y2="0">
                  <stop offset="0" stopColor="#f24ee8" />
                  <stop offset="1" stopColor="#bb22b8" />
                </linearGradient>
                <linearGradient id="front" x1="0" x2="1" y1="0" y2="0">
                  <stop offset="0" stopColor="#c02fbb" />
                  <stop offset="1" stopColor="#b021b0" />
                </linearGradient>
              </defs>
              <path d="M90 490 870 386 1015 366 1099 458 1076 470V488L437 620 130 522V503z" fill="#80167e" />
              <path d="M128 490 870 388V410L210 513 188 510z" fill="url(#wall)" />
              <path d="M870 388 1035 408V434L870 410z" fill="#b81fb5" />
              <path d="M1035 408 1070 456 1062 460 1035 434z" fill="#9a1a9c" />
              <path d="M130 503 432 591V620L130 522z" fill="#a020a2" />
              <path d="M432 591 1076 462V488L437 620z" fill="url(#front)" />
            </svg>
          </div>
          <div className="flex w-[13px] shrink-0 flex-col bg-[#efefef]">
            <div className="h-[13px]"><Arrow dir="u" label="Tilt up" small /></div>
            <div className="flex flex-1 items-center pb-4 pl-px"><span className="h-[11px] w-[10px] border border-[#bbb] border-b-[#888] bg-linear-to-r from-[#f5f5f5] to-[#cfcfcf]" /></div>
            <div className="h-3"><Arrow dir="d" label="Tilt down" small /></div>
          </div>
        </div>
        <div className="flex h-[13px] shrink-0 bg-[#efefef]">
          <div className="w-3"><Arrow dir="l" label="Pan left" small /></div>
          <div className="flex-1 pt-px pl-[223px]"><div className="h-[10px] w-[10px] border border-[#bbb] border-r-[#888] bg-linear-to-b from-[#f5f5f5] to-[#cfcfcf]" /></div>
          <div className="w-3"><Arrow dir="r" label="Pan right" small /></div>
          <div className="w-[13px]">
            <svg width="13" height="13" viewBox="0 0 13 13" fill="#aaa" aria-hidden="true"><path d="M10 3h1v1h-1zM7 6h1v1H7zM10 6h1v1h-1zM4 9h1v1H4zM7 9h1v1H7zM10 9h1v1h-1z" /></svg>
          </div>
        </div>
      </div>
    </div>
  );
}

/* ---------- window frame ---------- */

const menus: [string, string, string][] = [
  ["", "F", "ile"],
  ["", "A", "pplication"],
  ["", "E", "dit"],
  ["", "V", "iew"],
  ["Pa", "r", "t"],
  ["Dra", "w", ""],
  ["", "M", "odify"],
  ["Cur", "s", "or"],
  ["", "U", "tilities"],
  ["Plug-", "I", "ns"],
  ["", "H", "elp"],
];

export default function App() {
  return (
    <div className="relative flex h-screen min-h-[740px] flex-col overflow-hidden bg-[#101410] font-['Liberation_Sans',Arial,sans-serif] text-[11px] leading-[14px] text-black">
      <div className="flex min-h-0 flex-1 flex-col rounded-lg border border-[#2a2224] bg-linear-to-b from-[#8e9a84] from-5% via-[#b8a29e] via-30% to-[#b49c98] px-[6px] pb-1.5">
        <header className="-mx-[6px] flex h-7 shrink-0 items-start rounded-t-lg bg-[linear-gradient(90deg,#8c9a78,#526a32_30%,#3a4f18_50%,#2b3514_78%,#62665a)] pr-[7px] pl-[6px] shadow-[inset_0_1px_0_#b8c4a8]">
          <div className="flex h-7 items-center gap-1.5 rounded-full bg-[linear-gradient(90deg,#b3bba4,#a3ad90_85%,transparent)] pr-5">
            <AppMark size={16} />
            <h1 className="font-['Open_Sans','Noto_Sans',sans-serif] text-xs text-[#101010]">AR992374-A (AXYZ2) - PanelBUILDER Part Editor</h1>
          </div>
          <button aria-label="Move to other screen" className="ml-auto flex h-[19px] w-[31px] items-center justify-center rounded-b-md border border-t-0 border-[#c9cdc0] bg-linear-to-b from-[#7a8070] to-[#2a3020]">
            <svg width="17" height="10" viewBox="0 0 17 10" aria-hidden="true"><path d="m.5 5 4-4v2.500h8V1l4 4-4 4V6.500h-8V9z" fill="#fff" stroke="#444" strokeWidth=".7" /></svg>
          </button>
          <div className="ml-3 flex h-[19px] overflow-hidden rounded-b-md border border-t-0 border-[#c9cdc0]">
            <button aria-label="Minimize" className="flex w-7 items-center justify-center bg-linear-to-b from-[#8a8f82] to-[#33382c]"><span className="mt-1 h-[3px] w-2.5 bg-white" /></button>
            <button aria-label="Maximize" className="flex w-[27px] items-center justify-center border-x border-[#c9cdc0] bg-linear-to-b from-[#8a8f82] to-[#33382c]"><span className="h-2 w-2.5 border-2 border-white" /></button>
            <button aria-label="Close" className="flex w-[46px] items-center justify-center bg-linear-to-b from-[#dd8d7c] via-[#c0402a] to-[#c9442a]">
              <svg width="12" height="10" viewBox="0 0 12 10" aria-hidden="true"><path d="m1.500 1 9 8M10.500 1l-9 8" stroke="#444" strokeWidth="3.600" /><path d="m1.500 1 9 8M10.500 1l-9 8" stroke="#fff" strokeWidth="2.500" /></svg>
            </button>
          </div>
        </header>
        <div className="flex min-h-0 flex-1 flex-col border border-[#54484a] bg-[#f0f0f0]">
          <nav aria-label="Menu" className="flex h-5 shrink-0 items-center gap-3 bg-linear-to-b from-white via-[#e4e8f5] to-[#d9def0] pl-[7px] font-['Open_Sans','Noto_Sans',sans-serif] text-xs">
            {menus.map(([a, u, b]) => (
              <button key={a + u + b}>
                {a}
                <u>{u}</u>
                {b}
              </button>
            ))}
          </nav>
          <div className="flex min-h-0 flex-1">
            <Sidebar />
            <div className="flex w-4 shrink-0 flex-col border-l border-[#9a9a9a] bg-[#f1f1f1]">
              <div className="h-[18px]"><Arrow dir="u" label="Scroll tools up" /></div>
              <div className={`${V_THUMB} h-[628px]`}><Grip vertical /></div>
              <div className="mt-auto h-5"><Arrow dir="d" label="Scroll tools down" /></div>
            </div>
            <div className="flex min-w-0 flex-1 flex-col pl-px">
              <div className="flex h-20 shrink-0">
                <div className="flex w-[504px] shrink-0 flex-col bg-[#c3d7fa]">
                  <ToolbarOne />
                  <ToolbarTwo />
                  <p className="pt-0.5 pl-[5px]">Connected Lines: Indicate start point</p>
                </div>
                <ModeBars />
              </div>
              <div className="flex h-[18px] shrink-0 border-t border-white bg-[#f1f1f1] pl-px">
                <div className="w-[17px]"><Arrow dir="l" label="Scroll page left" /></div>
                <div className={`${H_THUMB} my-px flex-1`}><Grip /></div>
                <div className="ml-6 w-[18px]"><Arrow dir="r" label="Scroll page right" /></div>
              </div>
              <div className="flex min-h-0 flex-1 pr-0.5 pl-px">
                <div className="flex min-w-0 flex-1 flex-col">
                  <DrawingArea />
                  <div className="h-[9px] shrink-0 border-t border-[#8b8f95] bg-[#f0f0f0] pt-px"><div className="h-px bg-[#6f747c]" /></div>
                  <PartsPanel />
                </div>
                <div className="w-[7px] shrink-0 border-r-2 border-l-2 border-[#111] border-l-[#6f6f6f] bg-white" />
                <PropertyPanel />
              </div>
              <footer className="flex h-[25px] shrink-0 items-stretch border-t border-[#6f747c] bg-[#f0f0f0] pl-px">
                <div className="flex w-[331px] items-center border-r border-[#a8a8a8] pl-1">
                  <Ico w={16} h={16} crisp><path d="M1 7.500h13M8.500 2v13" /><path d="m2 12 7-5" /></Ico>
                  <span className="ml-0.5 w-[148px]">-2452.1182, -1753.1928</span>
                  <Ico w={11} h={11}><path d="m1 1 9 9M10 1l-9 9" /></Ico>
                  <span className="ml-1.5">-2452.1182, -1753.1928</span>
                </div>
                <div className="flex w-[26px] items-center justify-center border-r border-[#8a8a8a]">
                  <span className="size-[11px] rounded-full border border-[#bbb] bg-white" />
                </div>
                <div className="ml-auto flex pr-px">
                  <div className="w-[17px]"><Arrow dir="l" label="Scroll status left" /></div>
                  <div className="w-[17px]"><Arrow dir="r" label="Scroll status right" /></div>
                </div>
              </footer>
            </div>
          </div>
        </div>
      </div>
      <ModelWindow />
    </div>
  );
}
